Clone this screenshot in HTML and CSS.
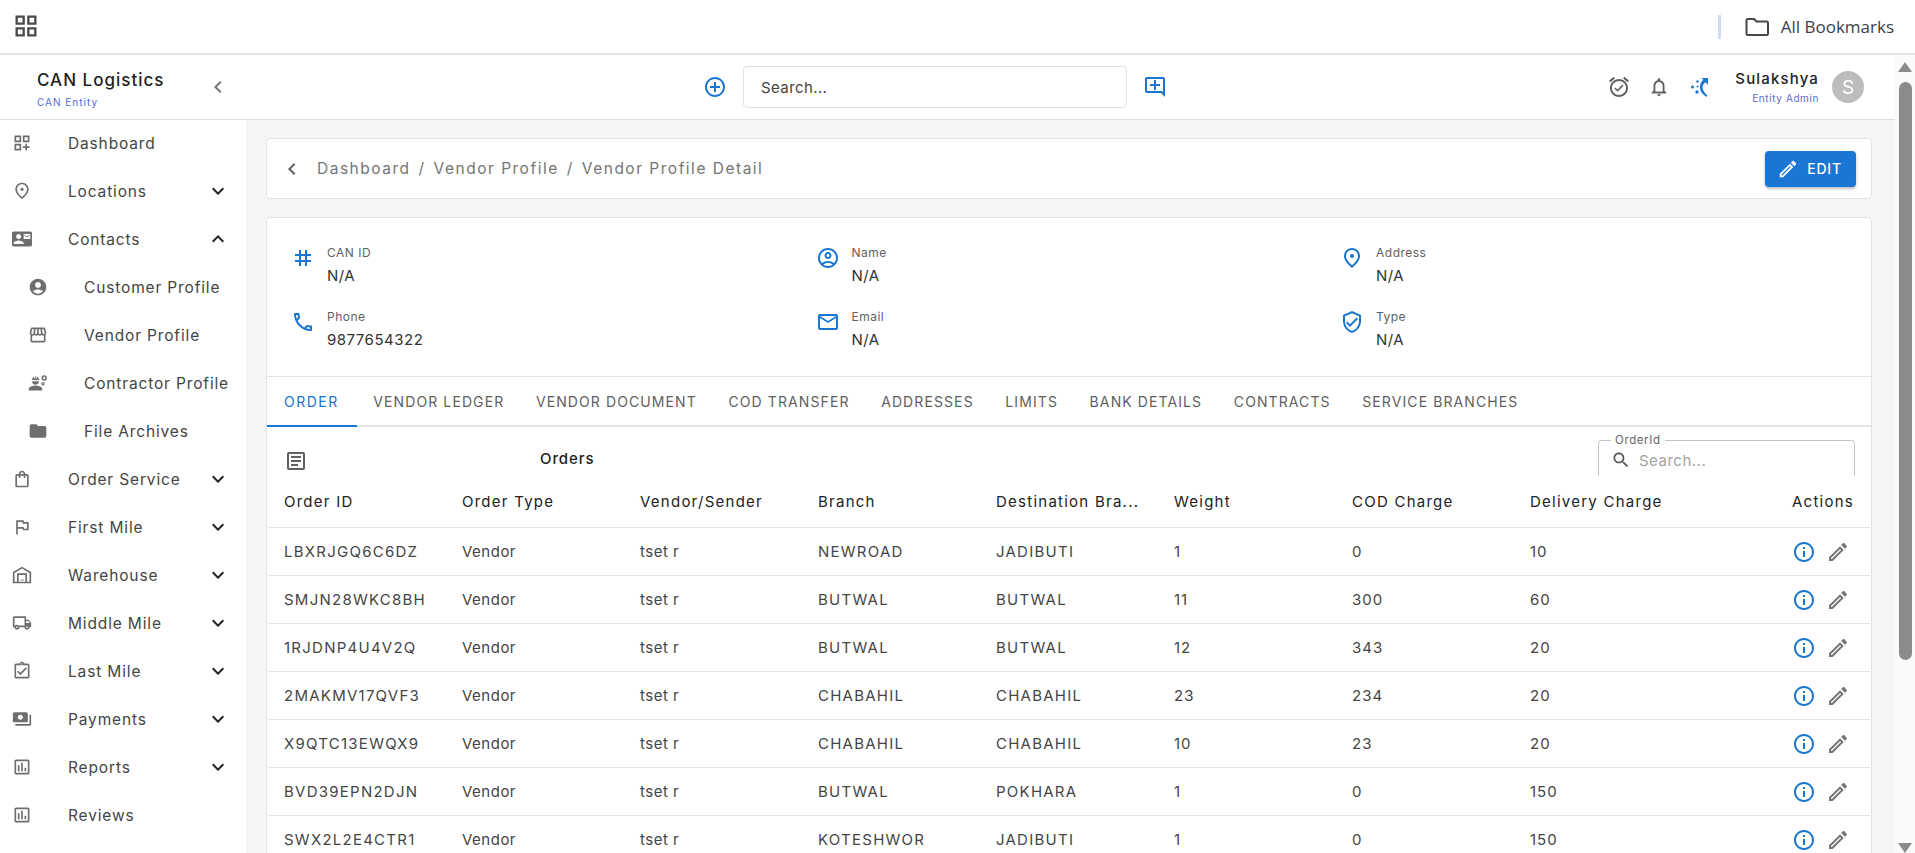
FILE: index.html
```html
<!DOCTYPE html>
<html lang="en">
<head>
<meta charset="utf-8">
<title>Vendor Profile Detail</title>
<link rel="stylesheet" href="styles.css">
</head>
<body>
<svg class="sprite" xmlns="http://www.w3.org/2000/svg">
<symbol id="i-grid" viewBox="0 0 24 24"><path d="M3 3v8h8V3H3zm6 6H5V5h4v4zm-6 4v8h8v-8H3zm6 6H5v-4h4v4zm4-16v8h8V3h-8zm6 6h-4V5h4v4zm-6 4v8h8v-8h-8zm6 6h-4v-4h4v4z"/></symbol>
<symbol id="i-dash" viewBox="0 0 24 24"><path d="M3 3h8v8H3V3zm2 2v4h4V5H5zm8-2h8v8h-8V3zm2 2v4h4V5h-4zM3 13h8v8H3v-8zm2 2v4h4v-4H5zm11-2h2v3h3v2h-3v3h-2v-3h-3v-2h3v-3z"/></symbol>
<symbol id="i-place" viewBox="0 0 24 24"><path d="M12 12c-1.1 0-2-.9-2-2s.9-2 2-2 2 .9 2 2-.9 2-2 2zm6-1.8C18 6.57 15.35 4 12 4s-6 2.57-6 6.2c0 2.34 1.95 5.44 6 9.14 4.05-3.7 6-6.8 6-9.14zM12 2c4.2 0 8 3.22 8 8.2 0 3.32-2.67 7.25-8 11.8-5.33-4.55-8-8.48-8-11.8C4 5.22 7.8 2 12 2z"/></symbol>
<symbol id="i-contact" viewBox="0 0 24 24"><path d="M21 8V7l-3 2-3-2v1l3 2 3-2zm1-5H2C.9 3 0 3.9 0 5v14c0 1.1.9 2 2 2h20c1.1 0 1.99-.9 1.99-2L24 5c0-1.1-.9-2-2-2zM8 6c1.66 0 3 1.34 3 3s-1.34 3-3 3-3-1.34-3-3 1.34-3 3-3zm6 12H2v-1c0-2 4-3.1 6-3.1s6 1.1 6 3.1v1zm8-6h-8V6h8v6z"/></symbol>
<symbol id="i-person" viewBox="0 0 24 24"><path d="M12 2C6.48 2 2 6.48 2 12s4.48 10 10 10 10-4.48 10-10S17.52 2 12 2zm0 4c1.93 0 3.5 1.57 3.5 3.5S13.93 13 12 13s-3.5-1.57-3.5-3.5S10.07 6 12 6zm0 14c-2.03 0-4.43-.82-6.14-2.88C7.55 15.8 9.68 15 12 15s4.45.8 6.14 2.12C16.43 19.18 14.03 20 12 20z"/></symbol>
<symbol id="i-store" viewBox="0 0 24 24"><path d="M21.9 8.89l-1.05-4.37c-.22-.9-1-1.52-1.91-1.52H5.05c-.9 0-1.69.63-1.9 1.52L2.1 8.89c-.24 1.02-.02 2.06.62 2.88.08.11.19.19.28.29V19c0 1.1.9 2 2 2h14c1.1 0 2-.9 2-2v-6.94c.09-.09.2-.18.28-.28.64-.82.87-1.87.62-2.89zm-2.99-3.9l1.05 4.37c.1.42.01.84-.25 1.17-.14.18-.44.47-.94.47-.61 0-1.14-.49-1.21-1.14L16.98 5l1.93-.01zM13 5h1.96l.54 4.52c.05.39-.07.78-.33 1.07-.22.26-.54.41-.95.41-.67 0-1.22-.59-1.22-1.31V5zM8.49 9.52L9.04 5H11v4.69c0 .72-.55 1.31-1.29 1.31-.34 0-.65-.15-.89-.41-.25-.29-.37-.68-.33-1.07zm-4.45-.16L5.05 5h1.97l-.58 4.86c-.08.65-.6 1.14-1.21 1.14-.49 0-.8-.29-.93-.47-.27-.32-.36-.75-.26-1.17zM5 19v-6.03c.08.01.15.03.23.03.87 0 1.66-.36 2.24-.95.6.6 1.4.95 2.31.95.87 0 1.65-.36 2.23-.93.59.57 1.39.93 2.29.93.84 0 1.64-.35 2.24-.95.58.59 1.37.95 2.24.95.08 0 .15-.02.23-.03V19H5z"/></symbol>
<symbol id="i-engineer" viewBox="0 0 24 24"><path d="M9 15c-2.67 0-8 1.34-8 4v2h16v-2c0-2.66-5.33-4-8-4zM5 10h8a4 4 0 0 1-8 0zM4.5 8.500h9V7.300h-.7A3.800 3.800 0 0 0 10.500 4.200V6.500h-1.200V3.500h-.8v3h-1.200V4.200A3.800 3.800 0 0 0 5.200 7.300h-.7z"/><circle cx="19.500" cy="6" r="2.300" fill="none" stroke="currentColor" stroke-width="1.800"/><circle cx="18" cy="13" r="1.500" fill="none" stroke="currentColor" stroke-width="1.300"/></symbol>
<symbol id="i-folder" viewBox="0 0 24 24"><path d="M10 4H4c-1.1 0-1.99.9-1.99 2L2 18c0 1.1.9 2 2 2h16c1.1 0 2-.9 2-2V8c0-1.1-.9-2-2-2h-8l-2-2z"/></symbol>
<symbol id="i-bag" viewBox="0 0 24 24"><path d="M18 6h-2c0-2.210-1.790-4-4-4S8 3.790 8 6H6c-1.100 0-2 .9-2 2v12c0 1.100.9 2 2 2h12c1.100 0 2-.9 2-2V8c0-1.100-.9-2-2-2zm-6-2c1.100 0 2 .9 2 2h-4c0-1.100.9-2 2-2zm6 16H6V8h2v2c0 .55.45 1 1 1s1-.45 1-1V8h4v2c0 .55.45 1 1 1s1-.45 1-1V8h2v12z"/></symbol>
<symbol id="i-flag" viewBox="0 0 24 24"><path d="M14.400 6L14 4H5v17h2v-7h5.600l.4 2h7V6h-5.600zm3.600 8h-3.600l-.4-2H7V6h5.400l.4 2H18v6z"/></symbol>
<symbol id="i-house" viewBox="0 0 24 24"><path d="M23 22H1V8.500L12 2l11 6.500V22zm-2-2V9.600L12 4.300 3 9.600V20h3V10h12v10h3zM8 20h8v-8H8v8zm2.500-2.500h1.300v1.300h-1.300zm2.200 0H14v1.300h-1.300z"/></symbol>
<symbol id="i-truck" viewBox="0 0 24 24"><path d="M20 8h-3V4H3c-1.100 0-2 .9-2 2v11h2c0 1.660 1.340 3 3 3s3-1.340 3-3h6c0 1.660 1.340 3 3 3s3-1.340 3-3h2v-5l-3-4zm-.5 1.500l1.960 2.500H17V9.500h2.500zM6 18c-.55 0-1-.45-1-1s.45-1 1-1 1 .45 1 1-.45 1-1 1zm2.220-3c-.55-.61-1.330-1-2.220-1s-1.670.39-2.220 1H3V6h12v9H8.220zM18 18c-.55 0-1-.45-1-1s.45-1 1-1 1 .45 1 1-.45 1-1 1z"/></symbol>
<symbol id="i-task" viewBox="0 0 24 24"><path d="M18 9l-1.410-1.420L10 14.170l-2.590-2.580L6 13l4 4zm1-6h-4.180C14.400 1.840 13.300 1 12 1c-1.300 0-2.400.84-2.820 2H5c-.14 0-.27.01-.4.04-.39.08-.74.28-1.010.55-.18.18-.33.4-.43.64-.1.23-.16.49-.16.77v14c0 .27.06.54.16.78s.25.45.43.64c.27.27.62.47 1.010.55.13.02.26.03.4.03h14c1.100 0 2-.9 2-2V5c0-1.100-.9-2-2-2zm-7-.25c.41 0 .75.34.75.75s-.34.75-.75.75-.75-.34-.75-.75.34-.75.75-.75zM19 19H5V5h14v14z"/></symbol>
<symbol id="i-pay" viewBox="0 0 24 24"><path d="M19 14V6c0-1.100-.9-2-2-2H3c-1.100 0-2 .9-2 2v8c0 1.100.9 2 2 2h14c1.100 0 2-.9 2-2zm-9-1c-1.660 0-3-1.340-3-3s1.340-3 3-3 3 1.340 3 3-1.340 3-3 3zm13-6v11c0 1.100-.9 2-2 2H4v-2h17V7h2z"/></symbol>
<symbol id="i-chart" viewBox="0 0 24 24"><path d="M19 3H5c-1.100 0-2 .9-2 2v14c0 1.100.9 2 2 2h14c1.100 0 2-.9 2-2V5c0-1.100-.9-2-2-2zm0 16H5V5h14v14zM7 10h2v7H7zm4-3h2v10h-2zm4 6h2v4h-2z"/></symbol>
<symbol id="i-down" viewBox="0 0 24 24"><path d="M7.410 8.590 12 13.170l4.590-4.580L18 10l-6 6-6-6 1.410-1.410z"/></symbol>
<symbol id="i-up" viewBox="0 0 24 24"><path d="M7.410 15.410 12 10.830l4.590 4.580L18 14l-6-6-6 6z"/></symbol>
<symbol id="i-left" viewBox="0 0 24 24"><path d="M15.410 7.410 14 6l-6 6 6 6 1.410-1.410L10.830 12z"/></symbol>
<symbol id="i-add" viewBox="0 0 24 24"><path d="M13 7h-2v4H7v2h4v4h2v-4h4v-2h-4V7zm-1-5C6.480 2 2 6.480 2 12s4.480 10 10 10 10-4.480 10-10S17.520 2 12 2zm0 18c-4.410 0-8-3.590-8-8s3.590-8 8-8 8 3.590 8 8-3.590 8-8 8z"/></symbol>
<symbol id="i-comment" viewBox="0 0 24 24"><path d="M22 4c0-1.100-.9-2-2-2H4c-1.100 0-2 .9-2 2v12c0 1.100.9 2 2 2h14l4 4V4zm-2 13.170L18.830 16H4V4h16v13.170zM13 5h-2v4H7v2h4v4h2v-4h4V9h-4z"/></symbol>
<symbol id="i-alarm" viewBox="0 0 24 24"><path d="M22 5.720l-4.600-3.860-1.290 1.530 4.600 3.860L22 5.720zM7.880 3.390L6.600 1.860 2 5.710l1.290 1.530 4.590-3.850zM12 4c-4.970 0-9 4.030-9 9s4.020 9 9 9c4.970 0 9-4.030 9-9s-4.030-9-9-9zm0 16c-3.870 0-7-3.130-7-7s3.130-7 7-7 7 3.130 7 7-3.130 7-7 7zm-1.460-5.470L8.410 12.400l-1.060 1.060 3.180 3.180 6-6-1.060-1.060-4.930 4.950z"/></symbol>
<symbol id="i-bell" viewBox="0 0 24 24"><path d="M12 22c1.100 0 2-.9 2-2h-4c0 1.100.9 2 2 2zm6-6v-5c0-3.070-1.630-5.640-4.500-6.320V4c0-.83-.67-1.500-1.500-1.500s-1.500.67-1.500 1.500v.68C7.640 5.360 6 7.920 6 11v5l-2 2v1h16v-1l-2-2zm-2 1H8v-6c0-2.480 1.510-4.500 4-4.500s4 2.020 4 4.500v6z"/></symbol>
<symbol id="i-moon" viewBox="0 0 24 24"><path d="M20 22c-4.500-2.300-7-5.500-7-10 0-3 1.200-5.300 3.300-7.200L14.500 3H21v7l-2.300-2.700C16.700 8.700 15.500 10.200 15.500 12c0 3.200 1.900 5.700 4.500 8z"/><circle cx="10.500" cy="6.500" r="1.300"/><circle cx="5.500" cy="12" r="1.500"/><circle cx="10.500" cy="11.500" r="1"/><circle cx="10" cy="17" r="1.700"/></symbol>
<symbol id="i-edit" viewBox="0 0 24 24"><path d="M3 17.250V21h3.750L17.810 9.940l-3.750-3.750L3 17.250zM5.920 19H5v-.92l9.060-9.060.92.92L5.920 19zM20.710 5.630l-2.340-2.340c-.2-.2-.45-.29-.71-.29s-.51.1-.7.29l-1.830 1.830 3.750 3.750 1.830-1.830c.39-.39.39-1.020 0-1.410z"/></symbol>
<symbol id="i-info" viewBox="0 0 24 24"><path d="M11 7h2v2h-2zm0 4h2v6h-2zm1-9C6.480 2 2 6.480 2 12s4.480 10 10 10 10-4.480 10-10S17.520 2 12 2zm0 18c-4.410 0-8-3.590-8-8s3.590-8 8-8 8 3.590 8 8-3.590 8-8 8z"/></symbol>
<symbol id="i-tag" viewBox="0 0 24 24"><path d="M20 10V8h-4V4h-2v4h-4V4H8v4H4v2h4v4H4v2h4v4h2v-4h4v4h2v-4h4v-2h-4v-4h4zm-6 4h-4v-4h4v4z"/></symbol>
<symbol id="i-account" viewBox="0 0 24 24"><path d="M12 2C6.480 2 2 6.480 2 12s4.480 10 10 10 10-4.480 10-10S17.520 2 12 2zM7.350 18.500C8.660 17.560 10.260 17 12 17s3.340.56 4.650 1.500c-1.310.94-2.910 1.500-4.650 1.500s-3.340-.56-4.650-1.500zm10.790-1.380C16.450 15.800 14.320 15 12 15s-4.450.8-6.140 2.120C4.700 15.730 4 13.950 4 12c0-4.420 3.580-8 8-8s8 3.580 8 8c0 1.950-.7 3.730-1.860 5.120zM12 6c-1.930 0-3.500 1.570-3.500 3.500S10.070 13 12 13s3.500-1.570 3.500-3.500S13.930 6 12 6zm0 5c-.83 0-1.500-.67-1.500-1.500S11.170 8 12 8s1.500.67 1.500 1.500S12.830 11 12 11z"/></symbol>
<symbol id="i-phone" viewBox="0 0 24 24"><path d="M6.540 5c.06.89.21 1.760.45 2.590l-1.200 1.200c-.41-1.200-.67-2.470-.76-3.790h1.510m9.860 12.020c.85.24 1.720.39 2.600.45v1.490c-1.320-.09-2.590-.35-3.800-.75l1.200-1.190M7.500 3H4c-.55 0-1 .45-1 1 0 9.390 7.610 17 17 17 .55 0 1-.45 1-1v-3.490c0-.55-.45-1-1-1-1.240 0-2.450-.2-3.570-.57-.1-.04-.21-.05-.31-.05-.26 0-.51.1-.71.29l-2.200 2.200c-2.830-1.450-5.150-3.760-6.590-6.590l2.200-2.200c.28-.28.36-.67.25-1.020C8.700 6.450 8.500 5.250 8.500 4c0-.55-.45-1-1-1z"/></symbol>
<symbol id="i-mail" viewBox="0 0 24 24"><path d="M22 6c0-1.100-.9-2-2-2H4c-1.100 0-2 .9-2 2v12c0 1.100.9 2 2 2h16c1.100 0 2-.9 2-2V6zm-2 0l-8 5-8-5h16zm0 12H4V8l8 5 8-5v10z"/></symbol>
<symbol id="i-shield" viewBox="0 0 24 24"><path d="M12 1 3 5v6c0 5.550 3.840 10.740 9 12 5.160-1.260 9-6.450 9-12V5l-9-4zm7 10c0 4.520-2.980 8.690-7 9.930-4.020-1.240-7-5.410-7-9.930V6.300l7-3.110 7 3.110V11zm-11.590.59L6 13l4 4 8-8-1.410-1.420L10 14.170z"/></symbol>
<symbol id="i-article" viewBox="0 0 24 24"><path d="M19 5v14H5V5h14m0-2H5c-1.100 0-2 .9-2 2v14c0 1.100.9 2 2 2h14c1.100 0 2-.9 2-2V5c0-1.100-.9-2-2-2zM14 17H7v-2h7v2zm3-4H7v-2h10v2zm0-4H7V7h10v2z"/></symbol>
<symbol id="i-search" viewBox="0 0 24 24"><path d="M15.500 14h-.79l-.28-.27C15.410 12.590 16 11.110 16 9.500 16 5.910 13.090 3 9.500 3S3 5.910 3 9.500 5.910 16 9.500 16c1.610 0 3.090-.59 4.230-1.570l.27.28v.79l5 4.990L20.490 19l-4.990-5zm-6 0C7.010 14 5 11.990 5 9.500S7.010 5 9.500 5 14 7.010 14 9.500 11.990 14 9.500 14z"/></symbol>
</svg>

<div class="app">
  <div class="bookmarks">
    <svg class="ic ic-top"><use href="#i-grid"/></svg>
    <div class="bm-right">
      <span class="bm-divider"></span>
      <svg class="bm-folder" viewBox="0 0 24 20"><path d="M1.500 3.500a1.500 1.500 0 0 1 1.500-1.500h6l2.500 2.500h10a1.500 1.500 0 0 1 1.500 1.500v10.500a1.500 1.500 0 0 1-1.500 1.500H3a1.500 1.500 0 0 1-1.500-1.500z"/></svg>
      <span class="bm-text">All Bookmarks</span>
    </div>
  </div>
  <div class="window">
    <div class="content">
      <header class="header">
        <div class="brand">
          <div class="brand-text">
            <div class="brand-name">CAN Logistics</div>
            <div class="brand-sub">CAN Entity</div>
          </div>
          <svg class="ic ic-24 soft"><use href="#i-left"/></svg>
        </div>
        <div class="quick">
          <svg class="ic ic-24 blue"><use href="#i-add"/></svg>
          <div class="quick-input">Search...</div>
          <svg class="ic ic-24 blue"><use href="#i-comment"/></svg>
        </div>
        <div class="user">
          <svg class="ic ic-24 grey"><use href="#i-alarm"/></svg>
          <svg class="ic ic-22 grey"><use href="#i-bell"/></svg>
          <svg class="ic ic-24 blue"><use href="#i-moon"/></svg>
          <div class="user-text">
            <div class="user-name">Sulakshya</div>
            <div class="user-role">Entity Admin</div>
          </div>
          <div class="avatar">S</div>
        </div>
      </header>
      <div class="body">
        <nav class="sidebar">
          <div class="nav-item"><svg class="ic nav-ic"><use href="#i-dash"/></svg><span class="nav-label">Dashboard</span></div>
          <div class="nav-item"><svg class="ic nav-ic"><use href="#i-place"/></svg><span class="nav-label">Locations</span><svg class="ic chev"><use href="#i-down"/></svg></div>
          <div class="nav-item"><svg class="ic nav-ic"><use href="#i-contact"/></svg><span class="nav-label">Contacts</span><svg class="ic chev"><use href="#i-up"/></svg></div>
          <div class="nav-item sub"><svg class="ic nav-ic"><use href="#i-person"/></svg><span class="nav-label">Customer Profile</span></div>
          <div class="nav-item sub"><svg class="ic nav-ic"><use href="#i-store"/></svg><span class="nav-label">Vendor Profile</span></div>
          <div class="nav-item sub"><svg class="ic nav-ic"><use href="#i-engineer"/></svg><span class="nav-label">Contractor Profile</span></div>
          <div class="nav-item sub"><svg class="ic nav-ic"><use href="#i-folder"/></svg><span class="nav-label">File Archives</span></div>
          <div class="nav-item"><svg class="ic nav-ic"><use href="#i-bag"/></svg><span class="nav-label">Order Service</span><svg class="ic chev"><use href="#i-down"/></svg></div>
          <div class="nav-item"><svg class="ic nav-ic"><use href="#i-flag"/></svg><span class="nav-label">First Mile</span><svg class="ic chev"><use href="#i-down"/></svg></div>
          <div class="nav-item"><svg class="ic nav-ic"><use href="#i-house"/></svg><span class="nav-label">Warehouse</span><svg class="ic chev"><use href="#i-down"/></svg></div>
          <div class="nav-item"><svg class="ic nav-ic"><use href="#i-truck"/></svg><span class="nav-label">Middle Mile</span><svg class="ic chev"><use href="#i-down"/></svg></div>
          <div class="nav-item"><svg class="ic nav-ic"><use href="#i-task"/></svg><span class="nav-label">Last Mile</span><svg class="ic chev"><use href="#i-down"/></svg></div>
          <div class="nav-item"><svg class="ic nav-ic"><use href="#i-pay"/></svg><span class="nav-label">Payments</span><svg class="ic chev"><use href="#i-down"/></svg></div>
          <div class="nav-item"><svg class="ic nav-ic"><use href="#i-chart"/></svg><span class="nav-label">Reports</span><svg class="ic chev"><use href="#i-down"/></svg></div>
          <div class="nav-item"><svg class="ic nav-ic"><use href="#i-chart"/></svg><span class="nav-label">Reviews</span></div>
        </nav>
        <main class="main">
          <section class="crumbs">
            <svg class="ic ic-24 grey"><use href="#i-left"/></svg>
            <div class="crumb-text">Dashboard<i>/</i>Vendor Profile<i>/</i>Vendor Profile Detail</div>
            <button class="edit-btn"><svg class="ic ic-22"><use href="#i-edit"/></svg>EDIT</button>
          </section>
          <section class="card">
            <div class="facts">
              <div class="fact"><svg class="ic ic-24 blue"><use href="#i-tag"/></svg><div><div class="fact-label">CAN ID</div><div class="fact-value">N/A</div></div></div>
              <div class="fact"><svg class="ic ic-24 blue"><use href="#i-account"/></svg><div><div class="fact-label">Name</div><div class="fact-value">N/A</div></div></div>
              <div class="fact"><svg class="ic ic-24 blue"><use href="#i-place"/></svg><div><div class="fact-label">Address</div><div class="fact-value">N/A</div></div></div>
              <div class="fact"><svg class="ic ic-24 blue"><use href="#i-phone"/></svg><div><div class="fact-label">Phone</div><div class="fact-value">9877654322</div></div></div>
              <div class="fact"><svg class="ic ic-24 blue"><use href="#i-mail"/></svg><div><div class="fact-label">Email</div><div class="fact-value">N/A</div></div></div>
              <div class="fact"><svg class="ic ic-24 blue"><use href="#i-shield"/></svg><div><div class="fact-label">Type</div><div class="fact-value">N/A</div></div></div>
            </div>
            <div class="tabs">
              <div class="tab active">ORDER</div>
              <div class="tab">VENDOR LEDGER</div>
              <div class="tab">VENDOR DOCUMENT</div>
              <div class="tab">COD TRANSFER</div>
              <div class="tab">ADDRESSES</div>
              <div class="tab">LIMITS</div>
              <div class="tab">BANK DETAILS</div>
              <div class="tab">CONTRACTS</div>
              <div class="tab">SERVICE BRANCHES</div>
            </div>
            <div class="toolbar">
              <svg class="ic ic-24 grey toolbar-ic"><use href="#i-article"/></svg>
              <div class="toolbar-title">Orders</div>
              <fieldset class="filter">
                <legend>OrderId</legend>
                <svg class="ic ic-20 dark"><use href="#i-search"/></svg>
                <span>Search...</span>
              </fieldset>
            </div>
            <table class="orders">
              <thead>
                <tr><th>Order ID</th><th>Order Type</th><th>Vendor/Sender</th><th>Branch</th><th><span class="clip">Destination Bra...</span></th><th>Weight</th><th>COD Charge</th><th>Delivery Charge</th><th class="right">Actions</th></tr>
              </thead>
              <tbody>
                <tr><td class="up">LBXRJGQ6C6DZ</td><td>Vendor</td><td>tset r</td><td class="up">NEWROAD</td><td class="up">JADIBUTI</td><td class="num">1</td><td class="num">0</td><td class="num">10</td><td class="right"><span class="acts"><svg class="ic ic-24 blue"><use href="#i-info"/></svg><svg class="ic ic-24 soft"><use href="#i-edit"/></svg></span></td></tr>
                <tr><td class="up">SMJN28WKC8BH</td><td>Vendor</td><td>tset r</td><td class="up">BUTWAL</td><td class="up">BUTWAL</td><td class="num">11</td><td class="num">300</td><td class="num">60</td><td class="right"><span class="acts"><svg class="ic ic-24 blue"><use href="#i-info"/></svg><svg class="ic ic-24 soft"><use href="#i-edit"/></svg></span></td></tr>
                <tr><td class="up">1RJDNP4U4V2Q</td><td>Vendor</td><td>tset r</td><td class="up">BUTWAL</td><td class="up">BUTWAL</td><td class="num">12</td><td class="num">343</td><td class="num">20</td><td class="right"><span class="acts"><svg class="ic ic-24 blue"><use href="#i-info"/></svg><svg class="ic ic-24 soft"><use href="#i-edit"/></svg></span></td></tr>
                <tr><td class="up">2MAKMV17QVF3</td><td>Vendor</td><td>tset r</td><td class="up">CHABAHIL</td><td class="up">CHABAHIL</td><td class="num">23</td><td class="num">234</td><td class="num">20</td><td class="right"><span class="acts"><svg class="ic ic-24 blue"><use href="#i-info"/></svg><svg class="ic ic-24 soft"><use href="#i-edit"/></svg></span></td></tr>
                <tr><td class="up">X9QTC13EWQX9</td><td>Vendor</td><td>tset r</td><td class="up">CHABAHIL</td><td class="up">CHABAHIL</td><td class="num">10</td><td class="num">23</td><td class="num">20</td><td class="right"><span class="acts"><svg class="ic ic-24 blue"><use href="#i-info"/></svg><svg class="ic ic-24 soft"><use href="#i-edit"/></svg></span></td></tr>
                <tr><td class="up">BVD39EPN2DJN</td><td>Vendor</td><td>tset r</td><td class="up">BUTWAL</td><td class="up">POKHARA</td><td class="num">1</td><td class="num">0</td><td class="num">150</td><td class="right"><span class="acts"><svg class="ic ic-24 blue"><use href="#i-info"/></svg><svg class="ic ic-24 soft"><use href="#i-edit"/></svg></span></td></tr>
                <tr><td class="up">SWX2L2E4CTR1</td><td>Vendor</td><td>tset r</td><td class="up">KOTESHWOR</td><td class="up">JADIBUTI</td><td class="num">1</td><td class="num">0</td><td class="num">150</td><td class="right"><span class="acts"><svg class="ic ic-24 blue"><use href="#i-info"/></svg><svg class="ic ic-24 soft"><use href="#i-edit"/></svg></span></td></tr>
              </tbody>
            </table>
          </section>
        </main>
      </div>
    </div>
    <div class="scrollbar">
      <span class="arrow-up"></span>
      <span class="thumb-track"><span class="thumb"></span></span>
      <span class="arrow-down"></span>
    </div>
  </div>
</div>
</body>
</html>
```

FILE: styles.css
```css
* { box-sizing: border-box; }
html, body { margin: 0; height: 100%; overflow: hidden; }
body { font-family: "Inter", "Noto Sans", sans-serif; color: #212121; background: #fff; }
.sprite { display: none; }
.ic { fill: currentColor; flex: none; display: block; }
.ic-20 { width: 20px; height: 20px; }
.ic-22 { width: 22px; height: 22px; }
.ic-24 { width: 24px; height: 24px; }
.blue { color: #1976d2; }
.grey { color: #616161; }
.soft { color: #757575; }
.dark { color: #555; }

.app { height: 853px; display: flex; flex-direction: column; }
.bookmarks { height: 55px; flex: none; border-bottom: 2px solid #e3e3e3; display: flex; align-items: center; justify-content: space-between; padding: 0 21px 0 12px; }
.ic-top { width: 28px; height: 28px; color: #4a4a4a; margin-top: -1px; }
.bm-right { display: flex; align-items: center; }
.bm-divider { width: 3px; height: 24px; background: #cfdcf7; margin-right: 24px; }
.bm-folder { width: 24px; height: 20px; fill: none; stroke: #474747; stroke-width: 2; margin-right: 12px; }
.bm-text { font-family: "Open Sans", sans-serif; font-size: 17px; color: #3c4043; }

.window { flex: 1; display: flex; min-height: 0; }
.content { flex: 1; min-width: 0; display: flex; flex-direction: column; }
.header { height: 65px; flex: none; border-bottom: 1px solid #e0e0e0; display: flex; align-items: center; }
.brand { width: 246px; flex: none; display: flex; align-items: center; justify-content: space-between; padding: 0 16px 0 37px; }
.brand-name { font-size: 17px; font-weight: 500; color: #1f1f1f; letter-spacing: 1px; line-height: 22px; margin-top: 4px; }
.brand-sub { font-size: 10px; color: #4f6ae0; letter-spacing: 1px; line-height: 14px; margin-top: 4px; }
.quick { display: flex; align-items: center; margin-left: 457px; gap: 16px; }
.quick-input { width: 384px; height: 42px; border: 1px solid #e0e0e0; border-radius: 4px; padding: 0 17px; display: flex; align-items: center; font-size: 15px; letter-spacing: .4px; color: #444; }
.user { margin-left: auto; display: flex; align-items: center; padding-right: 31px; }
.user .ic + .ic { margin-left: 17px; }
.user-text { margin: 0 13px 0 24px; text-align: right; }
.user-name { font-size: 15px; font-weight: 500; letter-spacing: 1.15px; color: #222; line-height: 20px; }
.user-role { font-size: 10px; color: #5c6bc0; letter-spacing: .6px; line-height: 13px; margin-top: 3px; }
.avatar { width: 32px; height: 32px; border-radius: 50%; background: #bdbdbd; color: #fff; display: flex; align-items: center; justify-content: center; font-size: 19px; }

.body { flex: 1; min-height: 0; display: flex; }
.sidebar { width: 246px; flex: none; background: #fff; }
.nav-item { height: 48px; display: flex; align-items: center; padding: 0 16px 0 12px; color: #454545; }
.nav-item.sub { padding-left: 28px; }
.nav-ic { width: 20px; height: 20px; color: #6e6e6e; margin-right: 36px; margin-top: -2px; }
.nav-label { flex: 1; font-size: 15.500px; letter-spacing: .85px; margin-top: -2px; white-space: nowrap; }
.chev { width: 24px; height: 24px; color: #212121; margin-top: -2px; }

.main { flex: 1; min-width: 0; background: #f5f5f5; padding: 18px 23px 0 20px; overflow: hidden; }
.crumbs { height: 61px; background: #fff; border: 1px solid #e3e3e3; border-radius: 4px; display: flex; align-items: center; padding: 0 15px 0 13px; }
.crumb-text { flex: 1; margin-left: 13px; font-size: 15.500px; letter-spacing: 1.5px; color: #757575; }
.crumb-text i { font-style: normal; margin: 0 8px; }
.edit-btn { width: 91px; height: 36px; background: #1976d2; color: #fff; border: 0; border-radius: 4px; padding: 0 2px 0 0; display: flex; align-items: center; justify-content: center; gap: 8px; font-family: inherit; font-size: 14px; font-weight: 500; letter-spacing: .8px; box-shadow: 0 2px 3px rgba(0,0,0,.25); }

.card { margin-top: 18px; background: #fff; border: 1px solid #e3e3e3; border-radius: 4px; }
.facts { display: grid; grid-template-columns: 524.500px 524.500px 1fr; row-gap: 26px; padding: 27px 0 29px 24px; height: 159px; border-bottom: 1px solid #e3e3e3; }
.fact { display: flex; align-items: flex-start; gap: 12px; height: 38px; }
.fact > .ic { margin-top: 1px; }
.fact-label { font-size: 12px; letter-spacing: .5px; color: #616161; line-height: 16px; }
.fact-value { font-size: 15px; letter-spacing: .5px; color: #333; line-height: 22px; margin-top: 4px; }

.tabs { display: flex; height: 50px; border-bottom: 2px solid #e3e3e3; padding-right: 10px; }
.tab { height: 50px; padding: 0 15.300px 2px 16.300px; display: flex; align-items: center; font-size: 14px; letter-spacing: 1.100px; color: #5f5f5f; white-space: nowrap; }
.tab.active { width: 90px; flex: none; padding: 0 0 0 17px; letter-spacing: 1.500px; color: #1976d2; border-bottom: 2px solid #1976d2; }

.toolbar { height: 49px; display: flex; align-items: flex-start; padding: 0 16px 0 17px; }
.toolbar-ic { margin-top: 22px; }
.toolbar-title { margin-left: 232px; margin-top: 23px; font-size: 15px; font-weight: 500; letter-spacing: .9px; line-height: 18px; }
.filter { margin: 9px 0 0 auto; width: 257px; height: 40px; border: 1px solid #c4c4c4; border-bottom: 0; border-radius: 4px 4px 0 0; padding: 0 12px; display: flex; align-items: center; gap: 8px; font-size: 15px; letter-spacing: .5px; color: #a3a3a3; min-inline-size: 0; }
.filter legend { font-size: 11.500px; color: #666; padding: 0 4px; letter-spacing: .6px; line-height: 8px; }

.orders { width: 1602px; table-layout: fixed; border-collapse: collapse; margin-left: 1px; }
.orders th, .orders td { width: 178px; padding: 0 16px; text-align: left; overflow: hidden; white-space: nowrap; border-bottom: 1px solid #e3e3e3; }
.orders th { height: 51px; font-size: 15px; font-weight: 400; letter-spacing: 1.25px; color: #222; }
.orders td { height: 48px; font-size: 15px; letter-spacing: .5px; color: #454545; }
.orders td.up { letter-spacing: 1.25px; }
.orders td.num { letter-spacing: 1px; }
.orders .right { text-align: right; }
.clip { display: block; overflow: hidden; }
.acts { display: inline-flex; align-items: center; gap: 10px; vertical-align: middle; margin: 2px 4px 0 0; }

.scrollbar { width: 20px; flex: none; background: #fafafa; display: flex; flex-direction: column; align-items: center; }
.arrow-up { width: 0; height: 0; margin-top: 7px; border-left: 7px solid transparent; border-right: 7px solid transparent; border-bottom: 10px solid #8b8b8b; }
.thumb-track { flex: 1; width: 13px; padding-top: 10px; }
.thumb { display: block; width: 13px; height: 578px; background: #8b8b8b; border-radius: 7px; }
.arrow-down { width: 0; height: 0; border-left: 7px solid transparent; border-right: 7px solid transparent; border-top: 10px solid #8b8b8b; }
```
